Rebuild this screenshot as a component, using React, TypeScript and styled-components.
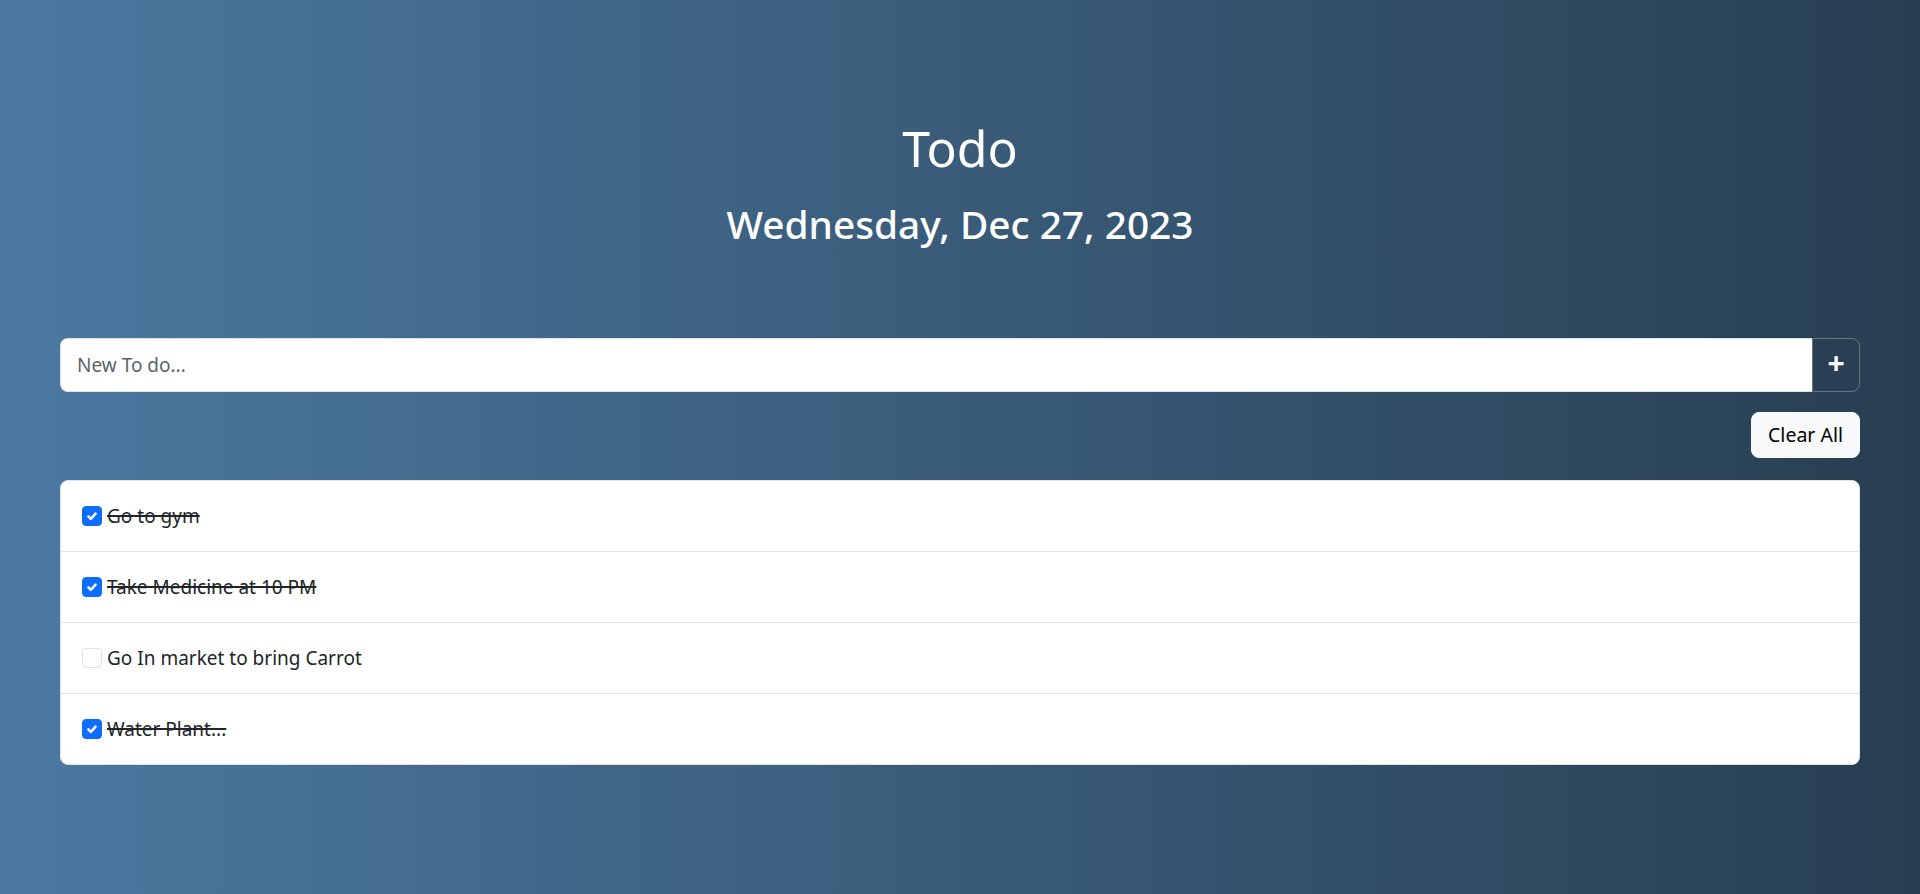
import React, { useState } from "react";
import styled, { createGlobalStyle, css } from "styled-components";

const GlobalStyle = createGlobalStyle`
  html, body {
    margin: 0;
    padding: 0;
  }
  body {
    font-family: "Noto Sans", "Open Sans", sans-serif;
    color: #212529;
    background: linear-gradient(to right, #4b79a1, #283e51);
    min-height: 100vh;
  }
  * { box-sizing: border-box; }
`;

const Page = styled.main`
  min-height: 100vh;
  display: flex;
  flex-direction: column;
  align-items: center;
  padding: 118px 60px 40px;
`;

const Header = styled.header`
  display: flex;
  flex-direction: column;
  align-items: center;
  color: #fff;
  margin-bottom: 90px;
`;

const Title = styled.h1`
  margin: 0;
  font-size: 50px;
  font-weight: 400;
  line-height: 1.2;
`;

const DateLine = styled.h2`
  margin: 23px 0 0;
  font-size: 38.8px;
  font-weight: 500;
  line-height: 1.2;
`;

const Content = styled.section`
  width: 100%;
  max-width: 1800px;
  display: flex;
  flex-direction: column;
`;

const InputGroup = styled.form`
  display: flex;
  height: 54px;
`;

const TextInput = styled.input`
  flex: 1;
  min-width: 0;
  border: 1px solid #dee2e6;
  border-right: none;
  border-radius: 8px 0 0 8px;
  padding: 12px 16px;
  font-family: inherit;
  font-size: 19px;
  color: #212529;
  background: #fff;
  outline: none;
  &::placeholder {
    color: #5c636a;
  }
`;

const AddButton = styled.button`
  width: 48px;
  border: 1px solid #6c757d;
  border-radius: 0 8px 8px 0;
  background: #2b3f54;
  color: #fff;
  font-family: inherit;
  font-size: 30px;
  font-weight: 700;
  line-height: 1;
  display: flex;
  align-items: center;
  justify-content: center;
  cursor: pointer;
  padding: 0 0 4px;
`;

const Toolbar = styled.div`
  display: flex;
  justify-content: flex-end;
  margin: 20px 0 22px;
`;

const ClearButton = styled.button`
  height: 46px;
  padding: 0 16px;
  border: 1px solid #f8f9fa;
  border-radius: 8px;
  background: #f8f9fa;
  color: #000;
  font-family: inherit;
  font-size: 19.5px;
  cursor: pointer;
`;

const List = styled.ul`
  list-style: none;
  margin: 0;
  padding: 0;
  background: #fff;
  border: 1px solid #dee2e6;
  border-radius: 8px;
  overflow: hidden;
`;

const Item = styled.li`
  display: flex;
  align-items: center;
  height: 71px;
  padding: 0 21px;
  border-top: 1px solid #dee2e6;
  &:first-child {
    border-top: none;
    height: 70px;
  }
`;

const Check = styled.span<{ $checked: boolean }>`
  width: 20px;
  height: 20px;
  border-radius: 4px;
  flex: none;
  display: flex;
  align-items: center;
  justify-content: center;
  margin-right: 5px;
  ${(p) =>
    p.$checked
      ? css`
          background: #0d6efd;
          border: 1px solid #0d6efd;
        `
      : css`
          background: #fff;
          border: 1px solid #dee2e6;
        `}
`;

const Label = styled.span<{ $done: boolean }>`
  font-size: 19px;
  line-height: 30px;
  color: #212529;
  text-decoration: ${(p) => (p.$done ? "line-through" : "none")};
  text-decoration-thickness: 2px;
`;

const todos = [
  { text: "Go to gym", done: true },
  { text: "Take Medicine at 10 PM", done: true },
  { text: "Go In market to bring Carrot", done: false },
  { text: "Water Plant...", done: true },
];

export default function App() {
  const [items] = useState(todos);
  return (
    <>
      <GlobalStyle />
      <Page>
        <Header>
          <Title>Todo</Title>
          <DateLine>Wednesday, Dec 27, 2023</DateLine>
        </Header>
        <Content>
          <InputGroup onSubmit={(e) => e.preventDefault()}>
            <TextInput placeholder="New To do..." />
            <AddButton type="submit">+</AddButton>
          </InputGroup>
          <Toolbar>
            <ClearButton type="button">Clear All</ClearButton>
          </Toolbar>
          <List>
            {items.map((t) => (
              <Item key={t.text}>
                <Check $checked={t.done}>
                  {t.done && (
                    <svg width="16" height="16" viewBox="0 0 20 20">
                      <path
                        d="M5.5 10.5l3 3L14.5 7"
                        fill="none"
                        stroke="#fff"
                        strokeWidth="3.2"
                        strokeLinecap="round"
                        strokeLinejoin="round"
                      />
                    </svg>
                  )}
                </Check>
                <Label $done={t.done}>{t.text}</Label>
              </Item>
            ))}
          </List>
        </Content>
      </Page>
    </>
  );
}
